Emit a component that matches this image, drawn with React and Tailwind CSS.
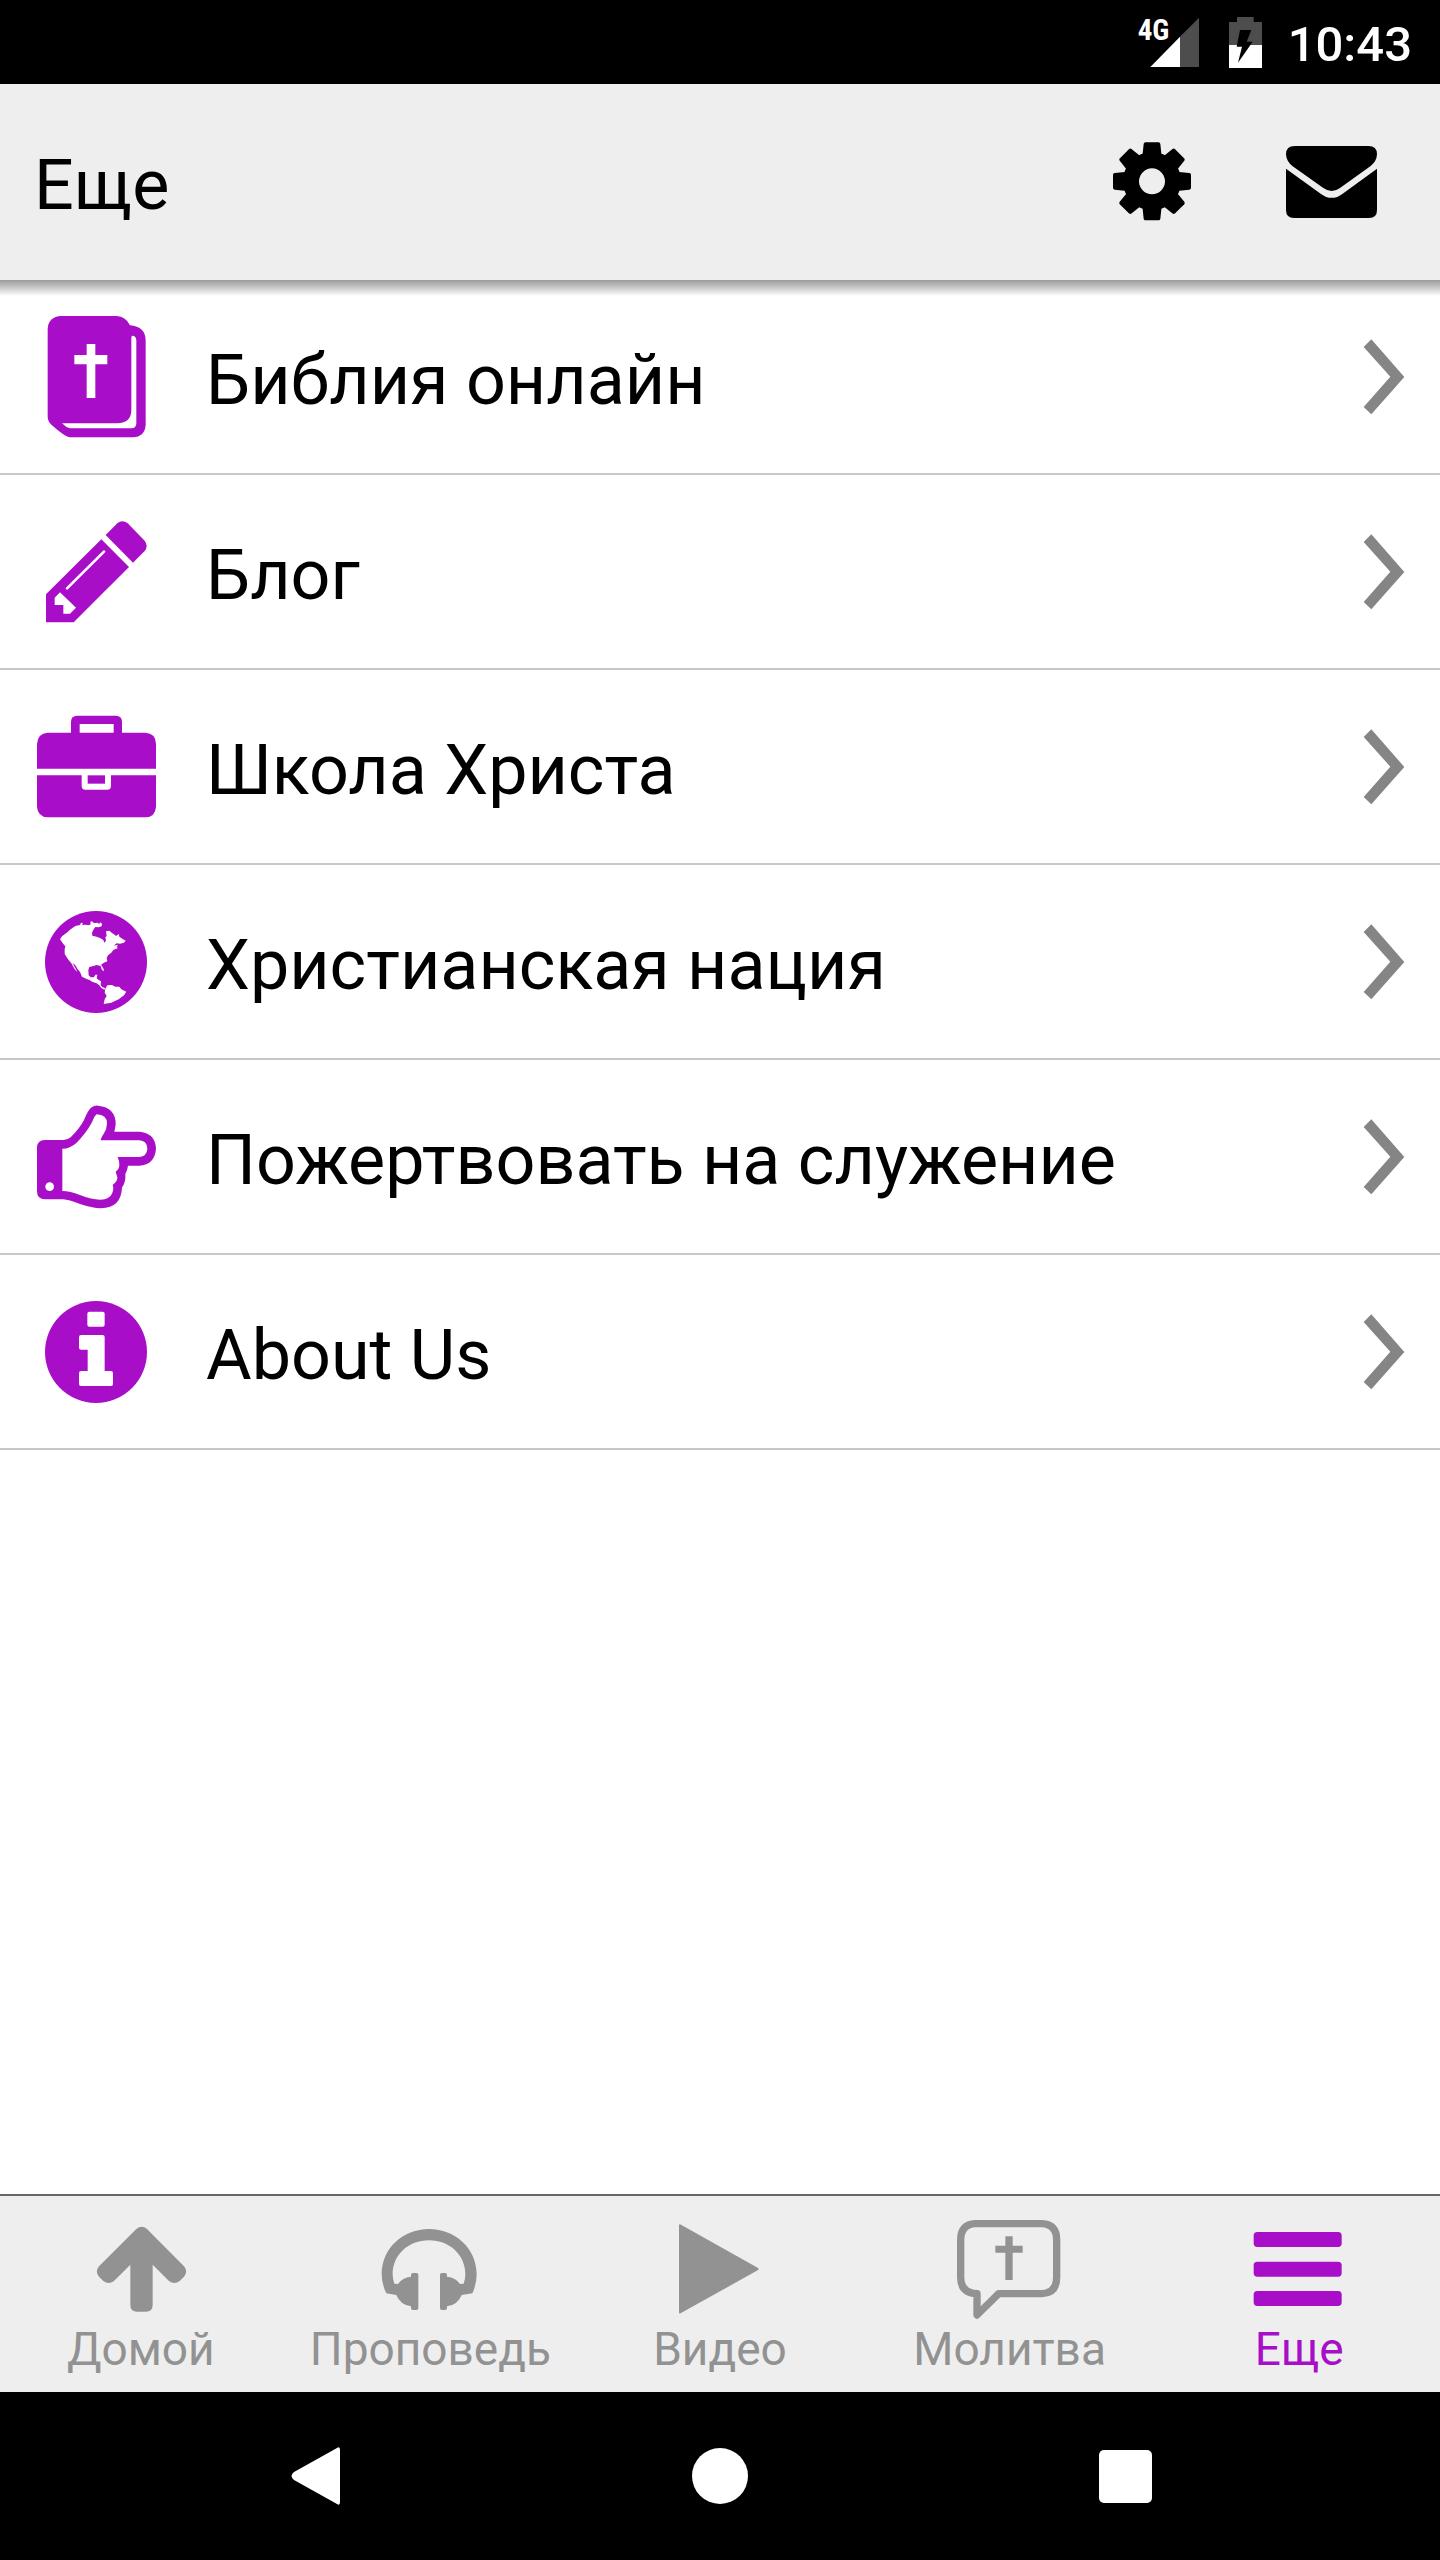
import { useState } from "react";

const PURPLE = "#a80dc8";
const GREY = "#929292";

/* ---------- menu icons ---------- */

const BookIcon = () => (
  <svg viewBox="102 73 372 372" className="h-[124px] w-[124px] shrink-0" aria-hidden="true">
    <path
      fill={PURPLE}
      d="M390 104Q437 108 437 150V402Q435 438 398 440H208Q192 436 155 403Q143 392 143 378V115Q145 78 184 76H350Q378 78 390 104Z"
    />
    <path
      fill="#fff"
      d="M396 135Q409 135 409 150V398Q409 413 394 413H210Q198 411 186 398H352Q394 396 394 358V140Z"
    />
    <path fill="#fff" d="M260 160h26v33h36v28h-36v101h-26v-101h-37v-28h37z" />
  </svg>
);

const PencilIcon = () => (
  <svg viewBox="102 658 372 372" className="h-[124px] w-[124px] shrink-0" aria-hidden="true">
    <g fill={PURPLE}>
      <path d="M138 911L304 746L387 829L221 995H138Z" />
      <path d="M317 733L352 698Q367 686 383 698L434 750Q446 766 434 781L399 816Z" />
    </g>
    <path stroke="#fff" strokeWidth="8" strokeLinecap="round" d="M201 893L312 783" />
    <path fill="#fff" d="M164 921L180 905L228 951L210 969H190V943H164Z" />
  </svg>
);

const BriefcaseIcon = () => (
  <svg viewBox="102 73 372 372" className="h-[124px] w-[124px] shrink-0" aria-hidden="true">
    <g fill={PURPLE}>
      <path
        fillRule="evenodd"
        d="M232 105H347Q366 105 366 124V156H436Q468 158 468 190V264H111V190Q113 158 143 156H213V124Q213 105 232 105ZM239 130V156H341V130Z"
      />
      <path d="M111 284H245V316Q245 327 256 327H322Q333 327 333 316V284H468V378Q466 409 436 410H143Q113 408 111 378Z" />
      <path d="M263 284H315V309H263Z" />
    </g>
  </svg>
);

const GlobeIcon = () => (
  <svg viewBox="102 658 372 372" className="h-[124px] w-[124px] shrink-0" aria-hidden="true">
    <circle cx="288" cy="844" r="153" fill={PURPLE} />
    <g fill="#fff">
      <path d="M180 776L186 767L200 756L212 746L226 736L240 733L243 726L248 727L247 733L256 732L266 734L272 731L271 723L276 722L282 728L292 726L298 730L300 725L306 729L305 737L296 740L286 739L281 746L276 756L277 765L290 768L300 772L310 778L313 786L318 780L316 770L320 766L318 752L328 750L336 757L342 761L348 766L356 760L358 768L368 775L377 780L372 786L360 789L350 788L341 795L354 792L350 799L354 802L340 808L334 816L324 824L320 832L322 842L312 846L303 852L308 860L312 868L310 872L305 866L302 856L290 853L280 856L268 859L265 868L266 884L272 890L282 890L286 882L292 882L290 893L296 898L303 902L302 914L308 920L316 923L313 927L304 922L298 914L290 908L276 903L270 899L258 894L246 888L240 874L232 864L226 854L217 846L228 866L232 874L224 866L214 848L204 836L194 820L194 806L196 797L190 790Z" />
      <path d="M316 924L322 914L336 913L346 918L358 918L364 926L379 933L372 944L356 956L334 966L311 970L314 956L320 946L314 936Z" />
    </g>
  </svg>
);

const HandIcon = () => (
  <svg viewBox="102 43 372 372" className="h-[124px] w-[124px] shrink-0" aria-hidden="true">
    <path
      fill={PURPLE}
      fillRule="evenodd"
      d="M135 178H190Q203 178 212 170Q240 142 252 118Q264 88 275 80Q283 74 294 75Q348 80 347 132L343 153H420Q466 158 468 204Q464 252 418 255H384Q382 270 376 280Q378 305 366 320Q364 382 303 383Q275 382 240 370Q205 357 190 356H135Q111 356 111 332V202Q111 178 135 178ZM187 204V331Q210 331 240 343Q275 357 300 357Q338 357 340 322L338 313Q353 302 352 290L347 273Q358 265 358 252Q358 240 353 229H418Q441 226 442 204Q441 180 418 179H302Q303 172 312 158Q321 145 321 128Q321 103 290 101Q284 104 276 125Q258 158 230 186Q210 204 187 204Z"
    />
    <circle cx="149" cy="318" r="13" fill="#fff" />
  </svg>
);

const InfoIcon = () => (
  <svg viewBox="102 628 372 372" className="h-[124px] w-[124px] shrink-0" aria-hidden="true">
    <circle cx="288" cy="814" r="153" fill={PURPLE} />
    <g fill="#fff">
      <rect x="262" y="693" width="52" height="45" rx="6" />
      <path d="M243 763H308Q314 763 314 769V871H333Q339 871 339 877V910Q339 916 333 916H243Q237 916 237 910V877Q237 871 243 871H263V807H243Q237 807 237 801V769Q237 763 243 763Z" />
    </g>
  </svg>
);

const Chevron = () => (
  <svg viewBox="369 143 126 234" className="h-[78px] w-[42px] shrink-0" aria-hidden="true">
    <path fill="#858585" d="M394 147L493 260L394 372L371 350L451 259L371 170Z" />
  </svg>
);

/* ---------- header icons ---------- */

const teeth = [0, 45, 90, 135, 180, 225, 270, 315];

const GearIcon = () => (
  <svg viewBox="72 402 288 288" className="h-24 w-24" aria-hidden="true">
    {teeth.map((angle) => (
      <path
        key={angle}
        d="M196 427H236Q240 427 241 432L245 470H187L191 432Q192 427 196 427Z"
        transform={`rotate(${angle} 216 544)`}
      />
    ))}
    <circle cx="216" cy="544" r="63" fill="none" stroke="#000" strokeWidth="48" />
  </svg>
);

const MailIcon = () => (
  <svg viewBox="612 402 288 288" className="h-24 w-24" aria-hidden="true">
    <path d="M644 438H865Q891 438 891 463Q890 484 872 498L780 564Q755 582 730 564L638 499Q619 484 618 463Q618 438 644 438Z" />
    <path d="M618 506L722 581Q755 606 788 581L891 506V630Q891 654 867 654H642Q618 654 618 630Z" />
  </svg>
);

/* ---------- tab icons ---------- */

const ArrowUpIcon = () => (
  <svg viewBox="260 120 324 300" className="h-[100px] w-[108px]" fill="currentColor" aria-hidden="true">
    <path d="M408 147Q424 134 440 147L551 259Q564 275 551 290L538 303Q522 315 506 303L457 254V375Q457 395 437 395H410Q390 395 390 375V254L341 303Q325 315 309 303L296 290Q283 275 296 259Z" />
  </svg>
);

const HeadphonesIcon = () => (
  <svg viewBox="1129 120 324 300" className="h-[100px] w-[108px]" fill="currentColor" aria-hidden="true">
    <path d="M1160 340Q1146 312 1146 283C1146 205 1210 147 1288 147S1431 205 1431 283Q1431 312 1418 340L1386 345Q1374 375 1342 379V384Q1342 390 1336 390H1327Q1321 390 1321 384V285Q1321 279 1327 279H1336Q1342 279 1342 285V290Q1368 292 1381 312L1392 311Q1397 297 1397 283C1397 225 1350 181 1288 181S1179 225 1179 283Q1179 297 1184 311L1195 312Q1208 292 1234 290V285Q1234 279 1240 279H1250Q1256 279 1256 285V384Q1256 390 1250 390H1240Q1234 390 1234 384V379Q1202 375 1190 345Z" />
  </svg>
);

const PlayIcon = () => (
  <svg viewBox="558 120 324 300" className="h-[100px] w-[108px]" fill="currentColor" aria-hidden="true">
    <path d="M597 137Q597 131 603 134L833 263Q839 267 833 271L603 399Q597 403 597 397Z" />
  </svg>
);

const PrayerIcon = () => (
  <svg viewBox="-13 120 324 300" className="h-[100px] w-[108px]" fill="currentColor" aria-hidden="true">
    <path
      fill="none"
      stroke="currentColor"
      strokeWidth="22"
      strokeLinejoin="round"
      d="M45 131H245Q289 133 289 180V292Q289 339 245 341H115L50 405V341Q1 339 1 292V180Q1 133 45 131Z"
    />
    <path d="M135 169h22v28h30v21h-30v82h-22v-82h-30v-21h30z" />
  </svg>
);

const BarsIcon = () => (
  <svg viewBox="856 120 324 300" className="h-[100px] w-[108px]" fill="currentColor" aria-hidden="true">
    <rect x="882" y="156" width="264" height="45" rx="11" />
    <rect x="882" y="245" width="264" height="45" rx="11" />
    <rect x="882" y="333" width="264" height="45" rx="11" />
  </svg>
);

const menu = [
  { title: "Библия онлайн", Icon: BookIcon },
  { title: "Блог", Icon: PencilIcon },
  { title: "Школа Христа", Icon: BriefcaseIcon },
  { title: "Христианская нация", Icon: GlobeIcon },
  { title: "Пожертвовать на служение", Icon: HandIcon },
  { title: "About Us", Icon: InfoIcon },
];

const tabs = [
  { title: "Домой", Icon: ArrowUpIcon },
  { title: "Проповедь", Icon: HeadphonesIcon },
  { title: "Видео", Icon: PlayIcon },
  { title: "Молитва", Icon: PrayerIcon },
  { title: "Еще", Icon: BarsIcon },
];

const StatusBar = () => (
  <div className="flex h-[84px] items-center justify-end gap-[26px] bg-black pr-7 text-white">
    <div className="flex gap-[30px]">
      <div className="relative">
        <svg viewBox="174 48 183 153" className="h-[51px] w-[61px]" aria-hidden="true">
          <path fill="#4d4d4d" d="M357 50V198H300V107Z" />
          <path fill="#fff" d="M300 107V198H211Z" />
        </svg>
        <span className="absolute -top-0.5 left-0 font-['Roboto_Condensed',Roboto,sans-serif] text-[29px] leading-[30px] font-bold">
          4G
        </span>
      </div>
      <svg viewBox="447 48 99 153" className="h-[51px] w-[33px]" aria-hidden="true">
        <path fill="#4d4d4d" d="M471 48H521V63H546V132H447V63H471Z" />
        <path fill="#fff" d="M447 132H546V201H447Z" />
        <path d="M480 87H514L500 122H518L474 185L486 137H470Z" />
      </svg>
    </div>
    <span className="pt-1 text-[49px] leading-none font-medium">10:43</span>
  </div>
);

const SystemNav = () => (
  <div className="grid h-[168px] grid-cols-3 items-center justify-items-center bg-black px-28">
    <button aria-label="Назад">
      <svg viewBox="0 0 60 60" className="h-[60px] w-[60px]" fill="#fff">
        <path d="M52 2Q55 0 55 4V56Q55 60 52 58L9 34Q4 30 9 26Z" />
      </svg>
    </button>
    <button aria-label="Главный экран">
      <svg viewBox="0 0 60 60" className="h-[60px] w-[60px]" fill="#fff">
        <circle cx="30" cy="30" r="28" />
      </svg>
    </button>
    <button aria-label="Недавние">
      <svg viewBox="0 0 60 60" className="h-[60px] w-[60px]" fill="#fff">
        <rect x="4" y="4" width="53" height="53" rx="5" />
      </svg>
    </button>
  </div>
);

const App = () => {
  let [active, setActive] = useState("Еще");

  return (
    <div className="flex min-h-screen flex-col bg-white font-[Roboto,sans-serif] text-black">
      <StatusBar />

      <header className="relative flex h-[196px] items-center justify-between bg-[#eeeeee] pr-[60px] pl-[34px]">
        <h1 className="pt-[6px] text-[70px] leading-[82px]">Еще</h1>
        <div className="flex gap-[84px]">
          <button aria-label="Настройки">
            <GearIcon />
          </button>
          <button aria-label="Сообщения">
            <MailIcon />
          </button>
        </div>
        {/* drop shadow over the first row */}
        <div className="absolute inset-x-0 top-full h-4 bg-linear-to-b from-[#9c9c9c] via-[#cbcbcb] to-white"></div>
      </header>

      <main className="flex-1">
        <ul>
          {menu.map(({ title, Icon }) => (
            <li key={title} className="border-b-2 border-[#c8c8c8]">
              <a href="#" className="flex h-[193px] items-center gap-12 pr-[35px] pl-[34px]">
                <Icon />
                <span className="flex-1 pt-[6px] text-[70px] leading-[82px]">{title}</span>
                <Chevron />
              </a>
            </li>
          ))}
        </ul>
      </main>

      <nav className="overflow-hidden border-t-2 border-[#666666] bg-[#eeeeee]">
        <div className="-mx-1 grid grid-cols-5">
          {tabs.map(({ title, Icon }) => (
            <button
              key={title}
              className="flex flex-col items-center gap-1 pt-6 pb-[18px]"
              style={{ color: active === title ? PURPLE : GREY }}
              onClick={() => setActive(title)}
            >
              <Icon />
              <span className="text-[46px] leading-[50px]">{title}</span>
            </button>
          ))}
        </div>
      </nav>

      <SystemNav />
    </div>
  );
};

export default App;
